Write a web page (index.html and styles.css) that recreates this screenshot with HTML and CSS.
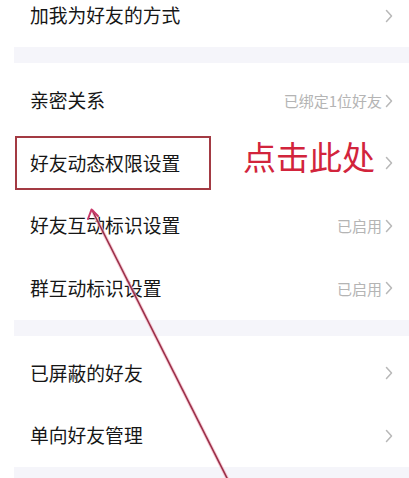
FILE: index.html
```html
<!DOCTYPE html>
<html lang="zh-CN">
<head>
<meta charset="utf-8">
<title>好友设置</title>
<link rel="stylesheet" href="styles.css">
</head>
<body>
<div class="screen">
  <div class="list">
    <section class="group first">
      <div class="row"><span class="label">加我为好友的方式</span><span class="right"><svg class="chev" viewBox="0 0 8 14"><polyline points="1.5,1.5 6.5,7 1.5,12.5"/></svg></span></div>
    </section>
    <div class="gap"></div>
    <section class="group">
      <div class="row"><span class="label">亲密关系</span><span class="right"><span class="value">已绑定1位好友</span><svg class="chev" viewBox="0 0 8 14"><polyline points="1.5,1.5 6.5,7 1.5,12.5"/></svg></span></div>
      <div class="row"><span class="label">好友动态权限设置</span><span class="right"><svg class="chev" viewBox="0 0 8 14"><polyline points="1.5,1.5 6.5,7 1.5,12.5"/></svg></span></div>
      <div class="row"><span class="label">好友互动标识设置</span><span class="right"><span class="value">已启用</span><svg class="chev" viewBox="0 0 8 14"><polyline points="1.5,1.5 6.5,7 1.5,12.5"/></svg></span></div>
      <div class="row"><span class="label">群互动标识设置</span><span class="right"><span class="value">已启用</span><svg class="chev" viewBox="0 0 8 14"><polyline points="1.5,1.5 6.5,7 1.5,12.5"/></svg></span></div>
    </section>
    <div class="gap"></div>
    <section class="group">
      <div class="row"><span class="label">已屏蔽的好友</span><span class="right"><svg class="chev" viewBox="0 0 8 14"><polyline points="1.5,1.5 6.5,7 1.5,12.5"/></svg></span></div>
      <div class="row"><span class="label">单向好友管理</span><span class="right"><svg class="chev" viewBox="0 0 8 14"><polyline points="1.5,1.5 6.5,7 1.5,12.5"/></svg></span></div>
    </section>
    <div class="gap tail"></div>
  </div>

  <div class="highlight"></div>
  <div class="callout">点击此处</div>
  <svg class="arrow" viewBox="0 0 409 478" width="409" height="478">
    <line x1="92" y1="210" x2="228" y2="480" class="shaft-glow"/>
    <line x1="92" y1="210" x2="228" y2="480" class="shaft"/>
    <polyline points="88,219 91.5,209.5 98,216" class="head"/>
  </svg>
</div>
</body>
</html>
```

FILE: styles.css
```css
html, body {
  margin: 0;
  padding: 0;
  background: #ffffff;
}

body {
  font-family: "Noto Sans CJK SC", "Noto Sans", sans-serif;
  color: #1a1a1a;
}

.screen {
  position: relative;
  width: 409px;
  height: 478px;
  overflow: hidden;
}

.list {
  display: flex;
  flex-direction: column;
  margin-top: -15.5px;
}

.group {
  display: flex;
  flex-direction: column;
  padding-top: 6.5px;
}

.group.first {
  padding-top: 0;
}

.row {
  height: 62.5px;
  display: flex;
  align-items: center;
  justify-content: space-between;
  padding: 0 16px 0 30px;
}

.label {
  font-size: 18.8px;
  line-height: 1;
  color: #161616;
}

.right {
  display: flex;
  align-items: center;
  gap: 3px;
}

.value {
  font-size: 15px;
  line-height: 1;
  color: #b4b4b4;
}

.chev {
  width: 8px;
  height: 14px;
}

.chev polyline {
  fill: none;
  stroke: #b8b8b8;
  stroke-width: 1.5;
  stroke-linecap: round;
  stroke-linejoin: round;
}

.gap {
  height: 16px;
  margin-left: 14px;
  background: #f5f5fa;
}

.gap.tail {
  height: 40px;
}

/* annotations drawn over the screenshot */
.highlight {
  position: absolute;
  left: 15px;
  top: 136px;
  width: 192px;
  height: 50px;
  border: 2.5px solid #a33a43;
}

.callout {
  position: absolute;
  left: 243px;
  top: 140px;
  font-size: 33px;
  line-height: 33px;
  color: #d2243c;
  white-space: nowrap;
}

.arrow {
  position: absolute;
  left: 0;
  top: 0;
}

.shaft-glow {
  stroke: #f4b6c6;
  stroke-width: 3.5;
  opacity: 0.7;
}

.shaft {
  stroke: #9a2f48;
  stroke-width: 1.6;
}

.head {
  fill: none;
  stroke: #c8396a;
  stroke-width: 2;
  stroke-linecap: round;
  stroke-linejoin: round;
}
```
